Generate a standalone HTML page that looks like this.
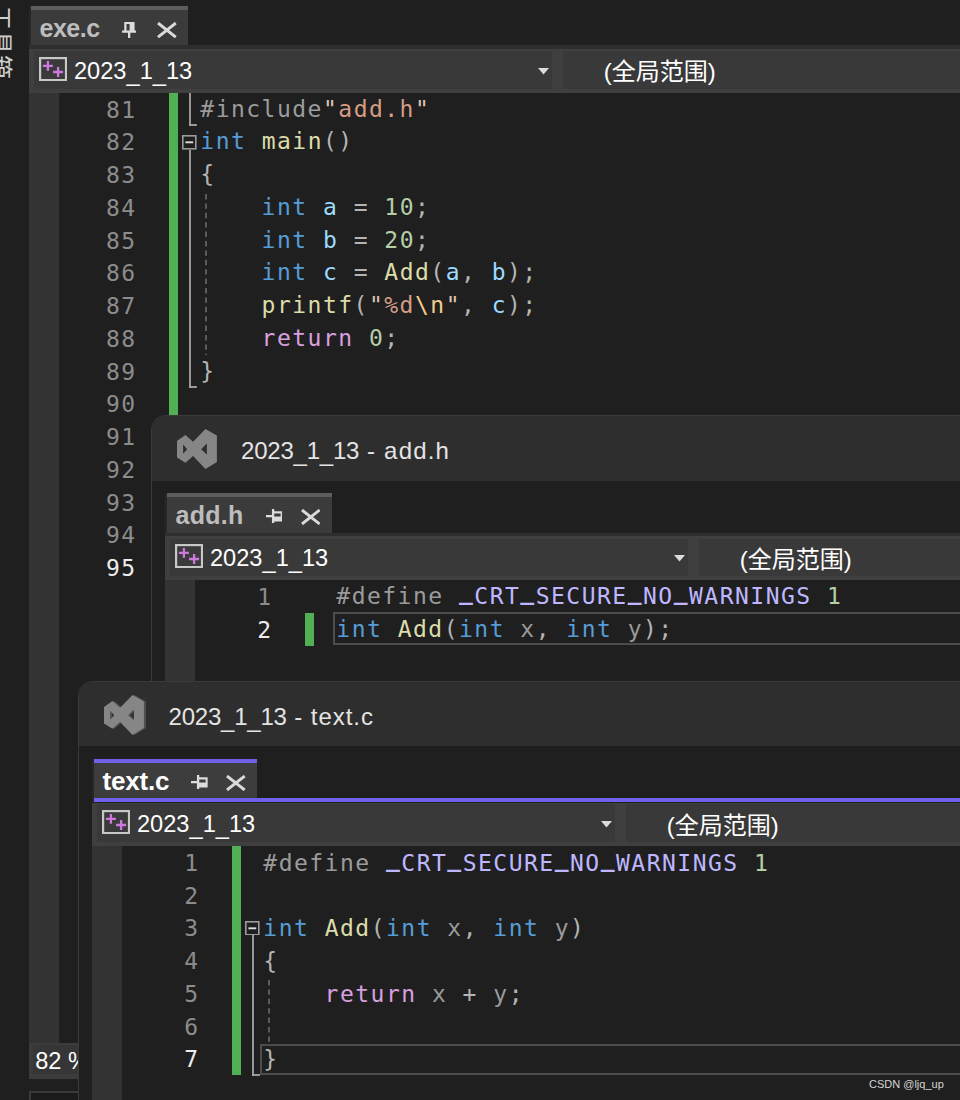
<!DOCTYPE html>
<html lang="zh">
<head>
<meta charset="utf-8">
<title>Visual Studio</title>
<style>
html,body{margin:0;padding:0;}
body{width:960px;height:1100px;overflow:hidden;background:#1f1f1f;position:relative;
  font-family:"Liberation Sans","Noto Sans CJK SC",sans-serif;color:#fff;}
.abs{position:absolute;}
.ln,.cl{position:absolute;font-family:"DejaVu Sans Mono","Liberation Mono",monospace;
  font-size:23px;letter-spacing:1.483px;line-height:33px;height:33px;white-space:pre;}
.ln{color:#8c8c8c;text-align:right;}
.ln.cur{color:#ececec;}
.cl{color:#b4b4b4;}
.k{color:#569cd6}.f{color:#dcdcaa}.v{color:#9cdcfe}.n{color:#b5cea8}.p{color:#b4b4b4}
.c{color:#d8a0df}.s{color:#d69d85}.q{color:#dfc3b3}.e{color:#f3cc8c}.pp{color:#9b9b9b}.m{color:#beb7ff}
.u{position:relative;top:-4.3px;font-weight:bold}.un{position:relative;top:1.9px}
.a{color:#9a9a9a}.d{color:#dadada}
.navtxt{position:absolute;font-size:23.6px;line-height:30px;color:#fff;white-space:nowrap;}
.scope{position:absolute;font-size:24px;line-height:30px;color:#fff;white-space:nowrap;}
.tabtxt{position:absolute;font-weight:bold;font-size:25px;line-height:30px;white-space:nowrap;}
.title{position:absolute;font-size:24px;line-height:30px;color:#e4e4e4;white-space:nowrap;}
</style>
</head>
<body>
<!-- main window: exe.c -->
<div class="abs" style="left:0;top:0;width:28.6px;height:1100px;background:#1f1f1f;overflow:hidden;"><div class="abs" style="left:-12px;top:6px;width:24px;height:90px;font-size:24px;line-height:24px;letter-spacing:0.5px;color:#cfcfcf;writing-mode:vertical-rl;text-orientation:sideways;">工具箱</div></div>
<div class="abs" style="left:28.6px;top:6.2px;width:2.4px;height:1093.8px;background:#272727;"></div>
<div class="abs" style="left:31px;top:6.2px;width:157px;height:39.1px;background:#3b3b3b;"></div>
<div class="abs" style="left:31px;top:6.2px;width:157px;height:4px;background:#5c5c5c;"></div>
<div class="tabtxt" style="left:39.5px;top:13px;letter-spacing:-0.5px;color:#bdbdbd;">exe.c</div>
<svg class="abs" style="left:121.9px;top:21.5px;" width="14.3" height="16.7" viewBox="0 0 14.3 16.7"><path fill="#dcdcdc" d="M2.25 0H12.6V9H7.6V2H4.5V9H2.25Z M0 8.4H14.25V10.7H0Z M6 10.7H8.3V16.65H6Z"/></svg>
<svg class="abs" style="left:157px;top:21.9px;" width="19.8" height="16.2" viewBox="0 0 19.8 16.2"><path d="M1 1L18.8 15.2M18.8 1L1 15.2" stroke="#dadada" stroke-width="2.9" fill="none"/></svg>
<div class="abs" style="left:29px;top:45.3px;width:931px;height:3.4px;background:#2e2e2e;"></div>
<div class="abs" style="left:29px;top:48.7px;width:931px;height:44px;background:#3f3f3f;"></div>
<div class="abs" style="left:33.75px;top:51.2px;width:518.55px;height:37.8px;background:#393939;"></div>
<div class="abs" style="left:563.2px;top:51.2px;width:396.8px;height:37.8px;background:#393939;"></div>
<svg class="abs" style="left:39px;top:56.8px;" width="28.1" height="24.2" viewBox="0 0 28.1 24.2"><rect x="1.1" y="1.1" width="25.9" height="22" fill="#3a3a3a" stroke="#c8c8c8" stroke-width="2.2"/><path d="M3.9 8.8h10M8.9 3.9v9.8M14.1 15h10M19.1 10.1v9.8" stroke="#cd78de" stroke-width="2.3" fill="none"/></svg>
<div class="navtxt" style="left:74px;top:56px;">2023<span class="un">_</span>1<span class="un">_</span>13</div>
<svg class="abs" style="left:537.5px;top:68px;" width="11" height="6.5" viewBox="0 0 11 6.5"><path d="M0 0h11L5.5 6.5z" fill="#dcdcdc"/></svg>
<div class="scope" style="left:603.7px;top:57px;">(全局范围)</div>
<div class="abs" style="left:29px;top:92.7px;width:29.75px;height:1007.3px;background:#333333;"></div>
<div class="abs" style="left:169px;top:92.7px;width:9.2px;height:322.3px;background:#50b053;"></div>
<div class="ln" style="left:56.6px;width:80px;top:93.6px;">81</div>
<div class="cl" style="left:200.3px;top:92.6px;"><span class="pp">#include</span><span class="q">"</span><span class="s">add.h</span><span class="q">"</span></div>
<div class="ln" style="left:56.6px;width:80px;top:126.35px;">82</div>
<div class="cl" style="left:200.3px;top:125.35px;"><span class="k">int</span><span class="p"> </span><span class="f">main</span><span class="p">()</span></div>
<div class="ln" style="left:56.6px;width:80px;top:159.1px;">83</div>
<div class="cl" style="left:200.3px;top:158.1px;"><span class="p">{</span></div>
<div class="ln" style="left:56.6px;width:80px;top:191.85px;">84</div>
<div class="cl" style="left:261.62px;top:190.85px;"><span class="k">int</span><span class="p"> </span><span class="v">a</span><span class="p"> = </span><span class="n">10</span><span class="p">;</span></div>
<div class="ln" style="left:56.6px;width:80px;top:224.6px;">85</div>
<div class="cl" style="left:261.62px;top:223.6px;"><span class="k">int</span><span class="p"> </span><span class="v">b</span><span class="p"> = </span><span class="n">20</span><span class="p">;</span></div>
<div class="ln" style="left:56.6px;width:80px;top:257.35px;">86</div>
<div class="cl" style="left:261.62px;top:256.35px;"><span class="k">int</span><span class="p"> </span><span class="v">c</span><span class="p"> = </span><span class="f">Add</span><span class="p">(</span><span class="v">a</span><span class="p">, </span><span class="v">b</span><span class="p">);</span></div>
<div class="ln" style="left:56.6px;width:80px;top:290.1px;">87</div>
<div class="cl" style="left:261.62px;top:289.1px;"><span class="f">printf</span><span class="p">(</span><span class="q">"</span><span class="s">%d</span><span class="e">\n</span><span class="q">"</span><span class="p">, </span><span class="v">c</span><span class="p">);</span></div>
<div class="ln" style="left:56.6px;width:80px;top:322.85px;">88</div>
<div class="cl" style="left:261.62px;top:321.85px;"><span class="c">return</span><span class="p"> </span><span class="n">0</span><span class="p">;</span></div>
<div class="ln" style="left:56.6px;width:80px;top:355.6px;">89</div>
<div class="cl" style="left:200.3px;top:354.6px;"><span class="p">}</span></div>
<div class="ln" style="left:56.6px;width:80px;top:388.35px;">90</div>
<div class="ln" style="left:56.6px;width:80px;top:421.1px;">91</div>
<div class="ln" style="left:56.6px;width:80px;top:453.85px;">92</div>
<div class="ln" style="left:56.6px;width:80px;top:486.6px;">93</div>
<div class="ln" style="left:56.6px;width:80px;top:519.35px;">94</div>
<div class="ln cur" style="left:56.6px;width:80px;top:552.1px;">95</div>
<svg class="abs" style="left:188.1px;top:92.7px;" width="4" height="33.3" viewBox="0 0 4 33.3"><path d="M2 0V33.3" stroke="#a6a6a6" stroke-width="1.8"/></svg>
<svg class="abs" style="left:189.1px;top:123px;" width="7.9" height="4" viewBox="0 0 7.9 4"><path d="M0 2H7.9" stroke="#a6a6a6" stroke-width="1.8"/></svg>
<svg class="abs" style="left:182.2px;top:135px;" width="14.6" height="14.6" viewBox="0 0 14.6 14.6"><rect x="0.8" y="0.8" width="13" height="13" fill="#1f1f1f" stroke="#9c9c9c" stroke-width="1.6"/><path d="M3.4 7.3h7.8" stroke="#dcdcdc" stroke-width="1.9"/></svg>
<svg class="abs" style="left:188.1px;top:150.3px;" width="4" height="237.7" viewBox="0 0 4 237.7"><path d="M2 0V237.7" stroke="#a6a6a6" stroke-width="1.8"/></svg>
<svg class="abs" style="left:189.1px;top:385px;" width="7.9" height="4" viewBox="0 0 7.9 4"><path d="M0 2H7.9" stroke="#a6a6a6" stroke-width="1.8"/></svg>
<svg class="abs" style="left:205.2px;top:193.5px;" width="2" height="161" viewBox="0 0 2 161"><path d="M1 0V161" stroke="#707070" stroke-width="1.5" stroke-dasharray="5.4 4"/></svg>
<div class="abs" style="left:29px;top:1042.5px;width:50px;height:36.2px;background:#3c3c3c;"></div>
<div class="abs" style="left:32.5px;top:1045px;width:46.5px;height:28.5px;background:#363636;"></div>
<div class="abs" style="left:35.2px;top:1046px;width:43.8px;height:30px;overflow:hidden;"><div style="font-size:23.6px;line-height:30px;color:#fff;white-space:nowrap;">82 %</div></div>
<div class="abs" style="left:29px;top:1078.7px;width:50px;height:12.5px;background:#1f1f1f;"></div>
<div class="abs" style="left:29px;top:1091.2px;width:60px;height:12px;background:#1b1b1b;border:2px solid #3a3a3a;box-sizing:border-box;"></div>
<!-- floating window: add.h -->
<div class="abs" style="left:151px;top:415px;width:829px;height:705px;background:#1f1f1f;border:1.5px solid #3a3a3a;border-radius:14.5px 0 0 0;box-sizing:border-box;overflow:hidden;"><div class="abs" style="left:0;top:0;width:100%;height:64.5px;background:#2e2e2e;"></div></div>
<svg class="abs" style="left:177px;top:429px;" width="40" height="40" viewBox="0 0 40 40"><path d="M28.5 0 L39.9 6.5 V33.1 L28.5 40 L16.1 26.9 L8.4 33.8 L0 28.4 V12 L8.4 6.1 L16.1 12.7 Z M6.1 15.6 V24.7 L10.2 20.2 Z M29.9 14.5 V25.5 L24.1 20.2 Z" fill="#868686" fill-rule="evenodd"/></svg>
<div class="title" style="left:241px;top:436px;"><span style="letter-spacing:-0.22px">2023<span class="un">_</span>1<span class="un">_</span>13</span><span style="letter-spacing:1.19px"> - add.h</span></div>
<div class="abs" style="left:164.6px;top:493.6px;width:2.4px;height:606.4px;background:#272727;"></div>
<div class="abs" style="left:167px;top:492.9px;width:164.5px;height:39.8px;background:#3b3b3b;"></div>
<div class="abs" style="left:167px;top:492.9px;width:164.5px;height:4px;background:#5c5c5c;"></div>
<div class="tabtxt" style="left:175.5px;top:500px;letter-spacing:0.25px;color:#bdbdbd;">add.h</div>
<svg class="abs" style="left:265.5px;top:508.7px;" width="16.7" height="14.3" viewBox="0 0 16.7 14.3"><path fill="#dcdcdc" d="M7.65 2.25H16.65V12.6H7.65V7.6H14.65V4.5H7.65Z M5.95 0H8.25V14.25H5.95Z M0 6H5.95V8.3H0Z"/></svg>
<svg class="abs" style="left:300.5px;top:509.1px;" width="19.7" height="16" viewBox="0 0 19.7 16"><path d="M1 1L18.7 15M18.7 1L1 15" stroke="#dadada" stroke-width="2.9" fill="none"/></svg>
<div class="abs" style="left:165px;top:532.7px;width:795px;height:3.4px;background:#2e2e2e;"></div>
<div class="abs" style="left:165px;top:536.1px;width:795px;height:44px;background:#3f3f3f;"></div>
<div class="abs" style="left:169.75px;top:538.6px;width:518.55px;height:37.8px;background:#393939;"></div>
<div class="abs" style="left:699.2px;top:538.6px;width:260.8px;height:37.8px;background:#393939;"></div>
<svg class="abs" style="left:175px;top:544.2px;" width="28.1" height="24.2" viewBox="0 0 28.1 24.2"><rect x="1.1" y="1.1" width="25.9" height="22" fill="#3a3a3a" stroke="#c8c8c8" stroke-width="2.2"/><path d="M3.9 8.8h10M8.9 3.9v9.8M14.1 15h10M19.1 10.1v9.8" stroke="#cd78de" stroke-width="2.3" fill="none"/></svg>
<div class="navtxt" style="left:210px;top:543px;">2023<span class="un">_</span>1<span class="un">_</span>13</div>
<svg class="abs" style="left:673.5px;top:555.4px;" width="11" height="6.5" viewBox="0 0 11 6.5"><path d="M0 0h11L5.5 6.5z" fill="#dcdcdc"/></svg>
<div class="scope" style="left:739.7px;top:545px;">(全局范围)</div>
<div class="abs" style="left:165px;top:580.1px;width:29.75px;height:519.9px;background:#333333;"></div>
<div class="abs" style="left:305px;top:612.5px;width:9.2px;height:33px;background:#50b053;"></div>
<div class="abs" style="left:333.2px;top:612.3px;width:636.8px;height:32.9px;border:2px solid #4c4c4c;box-sizing:border-box;"></div>
<div class="ln" style="left:192.6px;width:80px;top:581px;">1</div>
<div class="cl" style="left:336.3px;top:580px;"><span class="pp">#define</span><span class="p"> </span><span class="m"><span class="u">_</span>CRT<span class="u">_</span>SECURE<span class="u">_</span>NO<span class="u">_</span>WARNINGS</span><span class="p"> </span><span class="n">1</span></div>
<div class="ln cur" style="left:192.6px;width:80px;top:613.75px;">2</div>
<div class="cl" style="left:336.3px;top:612.75px;"><span class="k">int</span><span class="p"> </span><span class="f">Add</span><span class="p">(</span><span class="k">int</span><span class="p"> </span><span class="a">x</span><span class="p">, </span><span class="k">int</span><span class="p"> </span><span class="a">y</span><span class="p">);</span></div>
<!-- floating window: text.c -->
<div class="abs" style="left:78px;top:681px;width:902px;height:439px;background:#1f1f1f;border:1.5px solid #3a3a3a;border-radius:14.5px 0 0 0;box-sizing:border-box;overflow:hidden;"><div class="abs" style="left:0;top:0;width:100%;height:63.7px;background:#2e2e2e;"></div></div>
<svg class="abs" style="left:104px;top:695px;" width="40" height="40" viewBox="0 0 40 40"><path d="M28.5 0 L39.9 6.5 V33.1 L28.5 40 L16.1 26.9 L8.4 33.8 L0 28.4 V12 L8.4 6.1 L16.1 12.7 Z M6.1 15.6 V24.7 L10.2 20.2 Z M29.9 14.5 V25.5 L24.1 20.2 Z" fill="#868686" fill-rule="evenodd"/></svg>
<svg class="abs" style="left:106.3px;top:695px;" width="40" height="40" viewBox="0 0 40 40"><path d="M28.5 0 L39.9 6.5 V33.1 L28.5 40 L16.1 26.9 L8.4 33.8 L0 28.4 V12 L8.4 6.1 L16.1 12.7 Z M6.1 15.6 V24.7 L10.2 20.2 Z M29.9 14.5 V25.5 L24.1 20.2 Z" fill="#868686" opacity="0.4" fill-rule="evenodd"/></svg>
<div class="title" style="left:168.5px;top:702px;"><span style="letter-spacing:-0.22px">2023<span class="un">_</span>1<span class="un">_</span>13</span><span style="letter-spacing:0.94px"> - text.c</span></div>
<div class="abs" style="left:91.6px;top:759.4px;width:2.4px;height:340.6px;background:#272727;"></div>
<div class="abs" style="left:94px;top:758.8px;width:163px;height:39.7px;background:#3d3d3d;"></div>
<div class="abs" style="left:94px;top:758.8px;width:163px;height:4px;background:#7160e8;"></div>
<div class="tabtxt" style="left:102.5px;top:766px;letter-spacing:-0.2px;font-size:26px;color:#ffffff;">text.c</div>
<svg class="abs" style="left:191px;top:774.5px;" width="16.7" height="14.3" viewBox="0 0 16.7 14.3"><path fill="#dcdcdc" d="M7.65 2.25H16.65V12.6H7.65V7.6H14.65V4.5H7.65Z M5.95 0H8.25V14.25H5.95Z M0 6H5.95V8.3H0Z"/></svg>
<svg class="abs" style="left:226px;top:774.9px;" width="19.7" height="16" viewBox="0 0 19.7 16"><path d="M1 1L18.7 15M18.7 1L1 15" stroke="#dadada" stroke-width="2.9" fill="none"/></svg>
<div class="abs" style="left:94px;top:797.6px;width:866px;height:4.9px;background:#7160e8;"></div>
<div class="abs" style="left:92px;top:802.6px;width:868px;height:43.3px;background:#3f3f3f;"></div>
<div class="abs" style="left:96.75px;top:804.4px;width:518.55px;height:37.8px;background:#393939;"></div>
<div class="abs" style="left:626.2px;top:804.4px;width:333.8px;height:37.8px;background:#393939;"></div>
<svg class="abs" style="left:102px;top:810px;" width="28.1" height="24.2" viewBox="0 0 28.1 24.2"><rect x="1.1" y="1.1" width="25.9" height="22" fill="#3a3a3a" stroke="#c8c8c8" stroke-width="2.2"/><path d="M3.9 8.8h10M8.9 3.9v9.8M14.1 15h10M19.1 10.1v9.8" stroke="#cd78de" stroke-width="2.3" fill="none"/></svg>
<div class="navtxt" style="left:137px;top:809px;">2023<span class="un">_</span>1<span class="un">_</span>13</div>
<svg class="abs" style="left:600.5px;top:821.2px;" width="11" height="6.5" viewBox="0 0 11 6.5"><path d="M0 0h11L5.5 6.5z" fill="#dcdcdc"/></svg>
<div class="scope" style="left:666.7px;top:811px;">(全局范围)</div>
<div class="abs" style="left:92px;top:845.9px;width:29.75px;height:254.1px;background:#333333;"></div>
<div class="abs" style="left:232px;top:845.9px;width:9.2px;height:229.5px;background:#50b053;"></div>
<div class="abs" style="left:260.2px;top:1043.5px;width:709.8px;height:31.1px;border:2px solid #4c4c4c;box-sizing:border-box;"></div>
<div class="ln" style="left:119.6px;width:80px;top:846.8px;">1</div>
<div class="cl" style="left:263.3px;top:846.8px;"><span class="pp">#define</span><span class="p"> </span><span class="m"><span class="u">_</span>CRT<span class="u">_</span>SECURE<span class="u">_</span>NO<span class="u">_</span>WARNINGS</span><span class="p"> </span><span class="n">1</span></div>
<div class="ln" style="left:119.6px;width:80px;top:879.55px;">2</div>
<div class="ln" style="left:119.6px;width:80px;top:912.3px;">3</div>
<div class="cl" style="left:263.3px;top:912.3px;"><span class="k">int</span><span class="p"> </span><span class="f">Add</span><span class="p">(</span><span class="k">int</span><span class="p"> </span><span class="a">x</span><span class="p">, </span><span class="k">int</span><span class="p"> </span><span class="a">y</span><span class="p">)</span></div>
<div class="ln" style="left:119.6px;width:80px;top:945.05px;">4</div>
<div class="cl" style="left:263.3px;top:945.05px;"><span class="p">{</span></div>
<div class="ln" style="left:119.6px;width:80px;top:977.8px;">5</div>
<div class="cl" style="left:324.62px;top:977.8px;"><span class="c">return</span><span class="p"> </span><span class="a">x</span><span class="p"> + </span><span class="a">y</span><span class="p">;</span></div>
<div class="ln" style="left:119.6px;width:80px;top:1010.55px;">6</div>
<div class="ln cur" style="left:119.6px;width:80px;top:1043.3px;">7</div>
<div class="cl" style="left:263.3px;top:1043.3px;"><span class="p">}</span></div>
<svg class="abs" style="left:245.4px;top:920.9px;" width="14.6" height="14.6" viewBox="0 0 14.6 14.6"><rect x="0.8" y="0.8" width="13" height="13" fill="#1f1f1f" stroke="#9c9c9c" stroke-width="1.6"/><path d="M3.4 7.3h7.8" stroke="#dcdcdc" stroke-width="1.9"/></svg>
<svg class="abs" style="left:250.9px;top:935.3px;" width="4" height="140.4" viewBox="0 0 4 140.4"><path d="M2 0V140.4" stroke="#a6a6a6" stroke-width="1.8"/></svg>
<svg class="abs" style="left:251.9px;top:1072.7px;" width="8.1" height="4" viewBox="0 0 8.1 4"><path d="M0 2H8.1" stroke="#a6a6a6" stroke-width="1.8"/></svg>
<svg class="abs" style="left:268px;top:980px;" width="2" height="63" viewBox="0 0 2 63"><path d="M1 0V63" stroke="#707070" stroke-width="1.5" stroke-dasharray="5.4 4"/></svg>
<div class="abs" style="left:869px;top:1077px;font-size:11px;line-height:14px;color:#d4d4d4;white-space:nowrap;">CSDN @ljq_up</div>
</body>
</html>
